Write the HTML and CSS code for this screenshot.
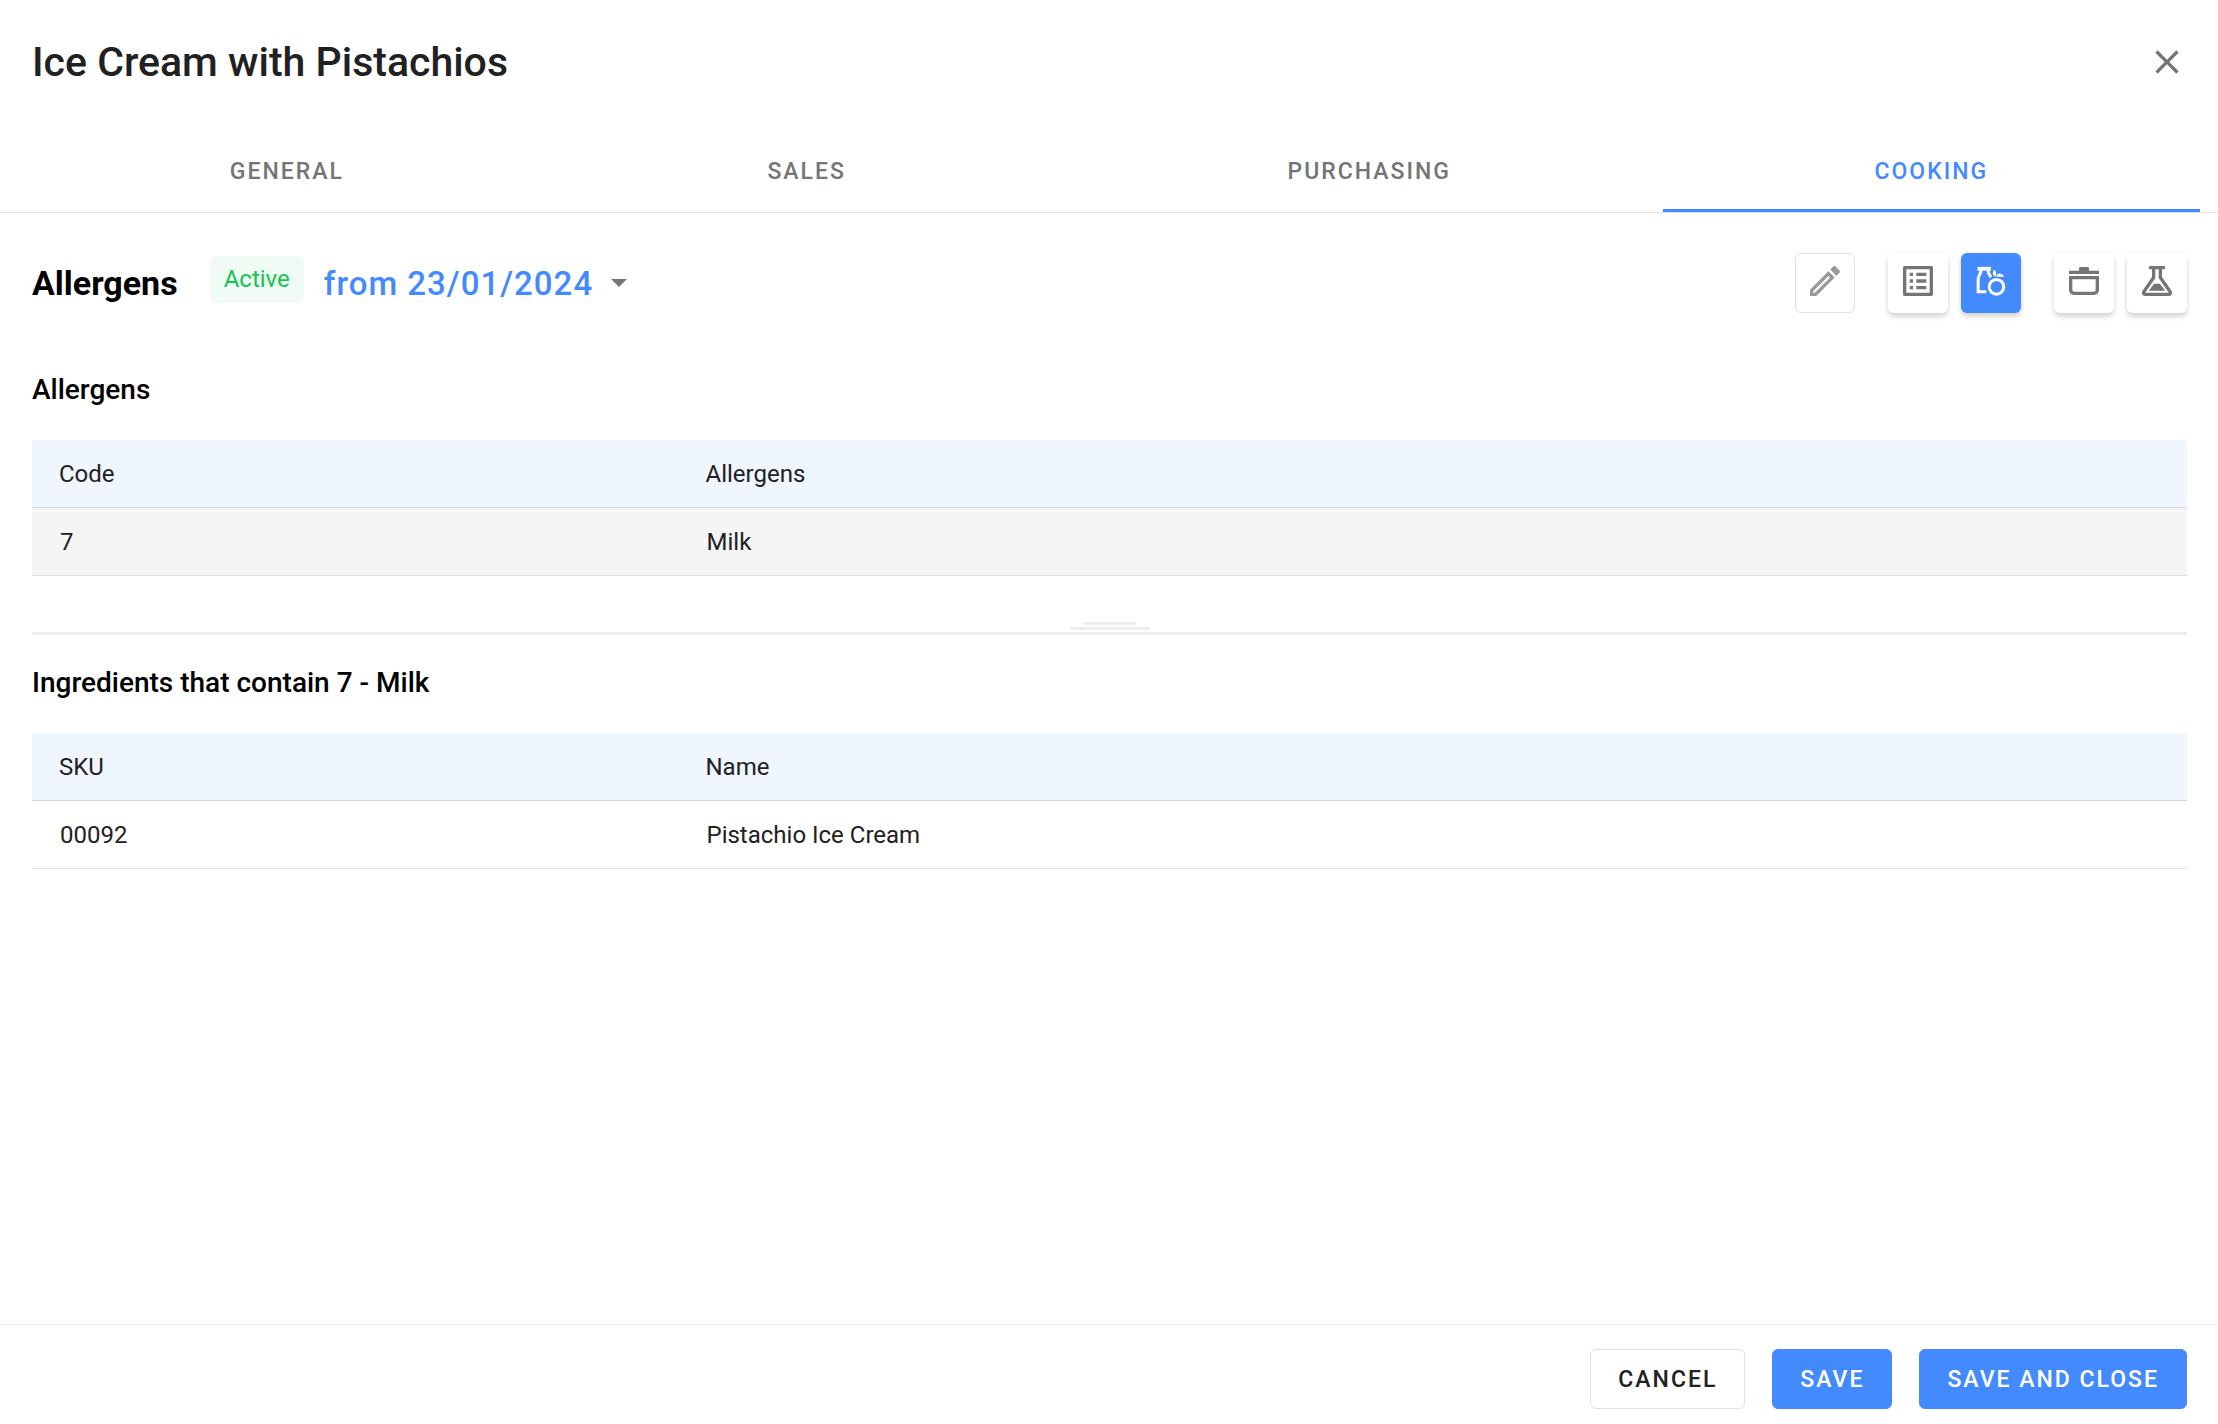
FILE: index.html
```html
<!DOCTYPE html>
<html lang="en">
<head>
    <meta charset="UTF-8">
    <meta name="viewport" content="width=device-width, initial-scale=1.0">
    <title>Ice Cream with Pistachios</title>
    <link rel="stylesheet" href="styles.css">
</head>
<body>
    <header class="header">
        <h1>Ice Cream with Pistachios</h1>
        <button class="close" type="button" aria-label="Close">
            <svg viewBox="0 0 24 24"><path d="M19 6.41 17.59 5 12 10.59 6.41 5 5 6.41 10.59 12 5 17.59 6.41 19 12 13.41 17.59 19 19 17.59 13.41 12z"/></svg>
        </button>
    </header>

    <nav class="tabs">
        <a class="tab" href="#general">GENERAL</a>
        <a class="tab" href="#sales">SALES</a>
        <a class="tab tab-group" href="#purchasing">PURCHASING</a>
        <a class="tab active" href="#cooking">COOKING</a>
    </nav>

    <main class="content">
        <div class="toolbar">
            <h2>Allergens</h2>
            <span class="badge">Active</span>
            <button class="version" type="button">
                from 23/01/2024
                <svg viewBox="0 0 16 8"><path d="M0 0h16L8 8z"/></svg>
            </button>
            <div class="actions">
                <button class="icon-btn outlined" type="button" aria-label="Edit">
                    <svg viewBox="0 0 24 24"><path fill-rule="evenodd" d="M3 17.25V21h3.75L17.81 9.94l-3.75-3.75zM4.9 18.1l9.1-9.1 1 1L5.900 19.100h-1zM20.710 7.040a1 1 0 0 0 0-1.410l-2.340-2.340a1 1 0 0 0-1.410 0l-1.830 1.830 3.750 3.750z"/></svg>
                </button>
                <div class="btn-group">
                    <button class="icon-btn" type="button" aria-label="Recipe">
                        <svg viewBox="0 0 24 24"><path d="M19 5v14H5V5h14m1.1-2H3.9c-.5 0-.9.4-.9.9v16.2c0 .4.4.9.9.9h16.2c.4 0 .9-.5.9-.9V3.9c0-.5-.5-.9-.9-.9zM11 7h6v2h-6V7zm0 4h6v2h-6v-2zm0 4h6v2h-6zM7 7h2v2H7zm0 4h2v2H7zm0 4h2v2H7z"/></svg>
                    </button>
                    <button class="icon-btn selected" type="button" aria-label="Allergens">
                        <svg viewBox="0 0 24 24">
                            <path d="M3.9 3.5H12v2.3H3.9z"/>
                            <path class="line" d="M6 5.5C6 8 4.3 8.5 4.3 11v7.5h4.9M10.2 5.5c.1 2 .7 3 1.8 4.3"/>
                            <circle class="line" cx="15.3" cy="15.5" r="4.4"/>
                            <path d="M14.9 9.3C12.6 8.5 12.800 6.500 14 5.200 15.200 6.300 15.600 7.800 14.900 9.300zM15.200 9.500C15.700 7.300 18 6.400 20 9.500z"/>
                        </svg>
                    </button>
                </div>
                <div class="btn-group">
                    <button class="icon-btn" type="button" aria-label="Cooking">
                        <svg viewBox="0 0 24 24"><path fill-rule="evenodd" d="M9 5.8V4.4q0-.8.8-.8h4.4q.8 0 .8.8v1.4h6v2H3v-2zM3 9h18v8.4a3 3 0 0 1-3 3H6a3 3 0 0 1-3-3zM5 11v6.4a1 1 0 0 0 1 1h12a1 1 0 0 0 1-1V11z"/></svg>
                    </button>
                    <button class="icon-btn" type="button" aria-label="Nutrition">
                        <svg viewBox="0 0 24 24">
                            <path fill-rule="evenodd" d="M8 3h8a1 1 0 0 1 0 2h-1v4.6l5.7 8.3c.9 1.4.1 3.1-1.5 3.1H4.8c-1.6 0-2.4-1.7-1.5-3.1L9 9.6V5H8a1 1 0 0 1 0-2zM11 5v5.2L4.9 19h14.2L13 10.2V5z"/>
                            <path d="M10.3 13.7h3.4l3.2 4.2H7.1z"/>
                        </svg>
                    </button>
                </div>
            </div>
        </div>

        <section>
            <h3>Allergens</h3>
            <table>
                <thead>
                    <tr><th>Code</th><th>Allergens</th></tr>
                </thead>
                <tbody>
                    <tr class="current"><td>7</td><td>Milk</td></tr>
                </tbody>
            </table>
        </section>

        <!-- Resize handle between the two tables -->
        <div class="splitter">
            <span class="grip grip-short"></span>
            <span class="grip"></span>
        </div>

        <section>
            <h3>Ingredients that contain 7 - Milk</h3>
            <table>
                <thead>
                    <tr><th>SKU</th><th>Name</th></tr>
                </thead>
                <tbody>
                    <tr><td>00092</td><td>Pistachio Ice Cream</td></tr>
                </tbody>
            </table>
        </section>
    </main>

    <footer class="footer">
        <button class="btn" type="button">CANCEL</button>
        <button class="btn primary" type="button">SAVE</button>
        <button class="btn primary" type="button">SAVE AND CLOSE</button>
    </footer>
</body>
</html>
```
FILE: styles.css
```css
* {
    box-sizing: border-box;
}

body {
    margin: 0;
    min-height: 100vh;
    display: flex;
    flex-direction: column;
    font-family: Roboto, sans-serif;
    font-size: 24px;
    color: #212121;
    background: #ffffff;
}

h1, h2, h3 {
    margin: 0;
    font-weight: 500;
}

button {
    font-family: inherit;
    padding: 0;
    border: none;
    background: none;
    cursor: pointer;
}

svg {
    display: block;
    fill: currentColor;
}

.header {
    display: flex;
    align-items: center;
    justify-content: space-between;
    padding: 32px 31px 0 32px;
}

.header h1 {
    font-size: 41px;
    line-height: 60px;
}

.close {
    color: #757575;
}

.close svg {
    width: 40px;
    height: 40px;
}

/* Tabs */
.tabs {
    display: flex;
    margin-top: 37px;
    padding: 0 18px;
    border-bottom: 1px solid #e0e0e0;
}

.tab {
    flex: 1 1 auto;
    height: 83px;
    border-bottom: 3px solid transparent;
    line-height: 86px;
    text-align: center;
    text-decoration: none;
    font-size: 23px;
    font-weight: 500;
    letter-spacing: 2px;
    color: #757575;
}

.tab-group {
    margin-left: 18px;
}

.tab.active {
    color: #448aff;
    border-bottom-color: #448aff;
}

/* Content */
.content {
    flex: 1;
    padding: 40px 31px 0 32px;
}

.toolbar {
    display: flex;
    align-items: center;
    height: 60px;
}

.toolbar h2 {
    font-size: 34px;
    font-weight: 700;
    color: #000000;
}

.badge {
    margin: 0 20px 8px 32px;
    padding: 0 14px;
    border-radius: 6px;
    line-height: 47px;
    color: #15c452;
    background: #f1fbf6;
}

.version {
    display: flex;
    align-items: center;
    gap: 18px;
    font-size: 33px;
    font-weight: 500;
    letter-spacing: 1px;
    color: #448aff;
}

.version svg {
    width: 16px;
    height: 8px;
    color: #757575;
}

.actions {
    display: flex;
    gap: 33px;
    margin-left: auto;
}

.btn-group {
    display: flex;
    gap: 13px;
}

.icon-btn {
    display: flex;
    justify-content: center;
    width: 60px;
    height: 60px;
    padding-top: 8px;
    border-radius: 6px;
    color: #757575;
    box-shadow: 0 4px 5px rgba(0, 0, 0, 0.14), 0 0 6px rgba(0, 0, 0, 0.05);
}

.icon-btn svg {
    width: 40px;
    height: 40px;
}

.icon-btn.outlined {
    padding-top: 7px;
    border: 1px solid #e0e0e0;
    color: #999999;
    box-shadow: none;
}

.icon-btn.selected {
    color: #ffffff;
    background: #448aff;
}

.line {
    fill: none;
    stroke: currentColor;
    stroke-width: 1.8;
}

h3 {
    padding: 57px 0 30px;
    font-size: 28px;
    line-height: 40px;
    color: #000000;
}

table {
    width: 100%;
    border-collapse: separate;
    border-spacing: 0;
    table-layout: fixed;
}

th, td {
    height: 68px;
    padding: 0 28px;
    border-bottom: 1px solid #e0e0e0;
    text-align: left;
    font-weight: 400;
}

th {
    padding: 0 27px;
    border-bottom-color: #cfd8e3;
    background: #eff6ff;
}

th:first-child {
    width: 30%;
}

.current td {
    background: #f5f5f5;
}

.splitter {
    display: flex;
    flex-direction: column;
    align-items: center;
    gap: 2px;
    margin-top: 46px;
    padding-bottom: 2px;
    border-bottom: 3px solid #eeeeee;
}

.grip {
    width: 80px;
    height: 3px;
    border-radius: 2px;
    background: #eeeeee;
}

.grip-short {
    width: 53px;
}

.splitter + section h3 {
    padding-top: 28px;
}

/* Footer */
.footer {
    display: flex;
    justify-content: flex-end;
    gap: 27px;
    padding: 24px 31px 15px;
    border-top: 1px solid #eeeeee;
}

.btn {
    height: 60px;
    padding: 0 27px;
    border: 1px solid #e0e0e0;
    border-radius: 6px;
    font-size: 23px;
    font-weight: 500;
    letter-spacing: 2px;
    color: #212121;
}

.btn.primary {
    border-color: #448aff;
    color: #ffffff;
    background: #448aff;
}
```
